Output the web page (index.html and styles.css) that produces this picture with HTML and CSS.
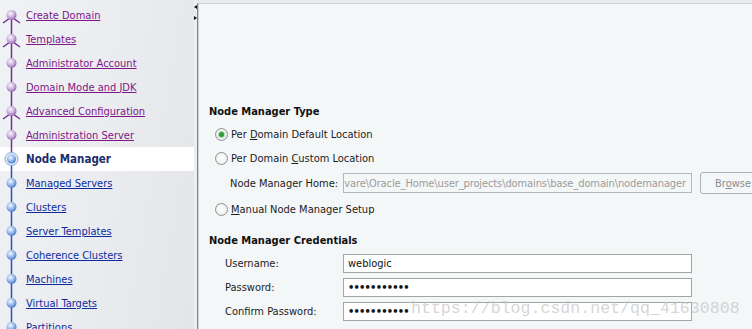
FILE: index.html
```html
<!DOCTYPE html>
<html lang="en">
<head>
    <meta charset="UTF-8">
    <meta name="viewport" content="width=device-width, initial-scale=1.0">
    <title>Node Manager</title>
    <link rel="stylesheet" href="styles.css">
</head>
<body>
    <div class="window">
        <nav class="steps">
            <div class="step">
                <svg class="node" width="26" height="24">
                    <defs>
                        <radialGradient id="gp" cx="0.4" cy="0.35" r="0.7">
                            <stop offset="0" stop-color="#fbf8fd"/>
                            <stop offset="0.45" stop-color="#d2bce2"/>
                            <stop offset="1" stop-color="#8c62ab"/>
                        </radialGradient>
                        <radialGradient id="gb" cx="0.4" cy="0.35" r="0.7">
                            <stop offset="0" stop-color="#f3f8ff"/>
                            <stop offset="0.45" stop-color="#a3c4f0"/>
                            <stop offset="1" stop-color="#3a70c8"/>
                        </radialGradient>
                    </defs>
                    <path class="ln-p" d="M11.5 12V24M3 20L11.5 14L20 20"/>
                    <circle class="dot-p" cx="11.5" cy="12" r="5"/>
                </svg>
                <a href="#">Create Domain</a>
            </div>
            <div class="step">
                <svg class="node" width="26" height="24"><path class="ln-p" d="M11.5 0V24M3 20L11.5 14L20 20"/><circle class="dot-p" cx="11.5" cy="12" r="5"/></svg>
                <a href="#">Templates</a>
            </div>
            <div class="step">
                <svg class="node" width="26" height="24"><path class="ln-p" d="M11.5 0V24"/><circle class="dot-p" cx="11.5" cy="12" r="5"/></svg>
                <a href="#">Administrator Account</a>
            </div>
            <div class="step">
                <svg class="node" width="26" height="24"><path class="ln-p" d="M11.5 0V24"/><circle class="dot-p" cx="11.5" cy="12" r="5"/></svg>
                <a href="#">Domain Mode and JDK</a>
            </div>
            <div class="step">
                <svg class="node" width="26" height="24"><path class="ln-p" d="M11.5 0V24M3 20L11.5 14L20 20"/><circle class="dot-p" cx="11.5" cy="12" r="5"/></svg>
                <a href="#">Advanced Configuration</a>
            </div>
            <div class="step">
                <svg class="node" width="26" height="24"><path class="ln-p" d="M11.5 0V24"/><circle class="dot-p" cx="11.5" cy="12" r="5"/></svg>
                <a href="#">Administration Server</a>
            </div>
            <div class="step current">
                <svg class="node" width="26" height="24"><path class="ln-p" d="M11.5 0V12"/><path class="ln-b" d="M11.5 12V24"/><circle class="ring" cx="11.5" cy="12" r="6.5"/><circle class="dot-b" cx="11.5" cy="12" r="4.5"/></svg>
                <span>Node Manager</span>
            </div>
            <div class="step todo">
                <svg class="node" width="26" height="24"><path class="ln-b" d="M11.5 0V24"/><circle class="dot-b" cx="11.5" cy="12" r="5"/></svg>
                <a href="#">Managed Servers</a>
            </div>
            <div class="step todo">
                <svg class="node" width="26" height="24"><path class="ln-b" d="M11.5 0V24"/><circle class="dot-b" cx="11.5" cy="12" r="5"/></svg>
                <a href="#">Clusters</a>
            </div>
            <div class="step todo">
                <svg class="node" width="26" height="24"><path class="ln-b" d="M11.5 0V24"/><circle class="dot-b" cx="11.5" cy="12" r="5"/></svg>
                <a href="#">Server Templates</a>
            </div>
            <div class="step todo">
                <svg class="node" width="26" height="24"><path class="ln-b" d="M11.5 0V24"/><circle class="dot-b" cx="11.5" cy="12" r="5"/></svg>
                <a href="#">Coherence Clusters</a>
            </div>
            <div class="step todo">
                <svg class="node" width="26" height="24"><path class="ln-b" d="M11.5 0V24"/><circle class="dot-b" cx="11.5" cy="12" r="5"/></svg>
                <a href="#">Machines</a>
            </div>
            <div class="step todo">
                <svg class="node" width="26" height="24"><path class="ln-b" d="M11.5 0V24"/><circle class="dot-b" cx="11.5" cy="12" r="5"/></svg>
                <a href="#">Virtual Targets</a>
            </div>
            <div class="step todo">
                <svg class="node" width="26" height="24"><path class="ln-b" d="M11.5 0V24"/><circle class="dot-b" cx="11.5" cy="12" r="5"/></svg>
                <a href="#">Partitions</a>
            </div>
        </nav>

        <div class="splitter">
            <span class="arrow-left"></span>
            <span class="arrow-right"></span>
        </div>

        <div class="main">
            <div class="panel">
                <h2>Node Manager Type</h2>
                <div class="option">
                    <span class="radio checked"></span>
                    <span>Per <u>D</u>omain Default Location</span>
                </div>
                <div class="option">
                    <span class="radio"></span>
                    <span>Per Domain <u>C</u>ustom Location</span>
                </div>
                <div class="home-row">
                    <span class="home-label">Node Manager Home:</span>
                    <div class="field disabled"><span>vare\Oracle_Home\user_projects\domains\base_domain\nodemanager</span></div>
                    <button class="browse" disabled>Br<u>o</u>wse</button>
                </div>
                <div class="option tall">
                    <span class="radio"></span>
                    <span><u>M</u>anual Node Manager Setup</span>
                </div>

                <h2 class="second">Node Manager Credentials</h2>
                <div class="cred-row">
                    <label class="cred-label" for="user">Username:</label>
                    <input class="text-input" id="user" type="text" value="weblogic">
                </div>
                <div class="cred-row">
                    <label class="cred-label" for="pass">Password:</label>
                    <input class="text-input" id="pass" type="password" value="welcome1234">
                </div>
                <div class="cred-row">
                    <label class="cred-label" for="pass2">Confirm Password:</label>
                    <input class="text-input" id="pass2" type="password" value="welcome1234">
                </div>
            </div>
        </div>

        <div class="watermark">https://blog.csdn.net/qq_41630808</div>
    </div>
</body>
</html>
```

FILE: styles.css
```css
* {
    margin: 0;
    padding: 0;
    box-sizing: border-box;
}

body {
    font-family: "DejaVu Sans Condensed", "DejaVu Sans", sans-serif;
    font-stretch: condensed;
    font-size: 11px;
    color: #1b1b1b;
    overflow: hidden;
}

.window {
    position: relative;
    display: flex;
    height: 329px;
    overflow: hidden;
}

/* left step list */

.steps {
    width: 194px;
    flex: none;
    padding-top: 3px;
    background: linear-gradient(100deg, #f1f2f5 0%, #eaecf0 50%, #e3e5e9 100%);
}

.step {
    display: flex;
    align-items: center;
    height: 24px;
    white-space: nowrap;
}

.step a {
    color: #7d1785;
    text-decoration: underline;
}

.step.todo a {
    color: #0c2c9e;
}

.step.current {
    background-color: #fff;
}

.step.current span {
    font-weight: bold;
    font-size: 11.5px;
    color: #1b2d6b;
}

.node {
    flex: none;
    display: block;
}

.ln-p,
.ln-b {
    fill: none;
    stroke-width: 1.5;
}

.ln-p {
    stroke: #74309a;
}

.ln-b {
    stroke: #2a4fc2;
}

.dot-p {
    fill: url(#gp);
}

.dot-b {
    fill: url(#gb);
}

.ring {
    fill: #e3edf9;
    stroke: #86a9d9;
    stroke-width: 1;
}

/* splitter between panes */

.splitter {
    width: 3px;
    flex: none;
    background-color: #eceef2;
    display: flex;
    flex-direction: column;
    align-items: flex-end;
    padding-top: 5px;
    gap: 7px;
}

.arrow-left,
.arrow-right {
    width: 0;
    height: 0;
    border-top: 2.5px solid transparent;
    border-bottom: 2.5px solid transparent;
}

.arrow-left {
    border-right: 3px solid #111;
}

.arrow-right {
    border-left: 3px solid #111;
}

/* right pane */

.main {
    flex: 1;
    display: flex;
    flex-direction: column;
    padding-top: 3px;
    background-color: #e8eaee;
}

.panel {
    flex: 1;
    background-color: #f4f7f8;
    border-top: 1px solid #cdd1d7;
    border-left: 1px solid #7e848d;
    box-shadow: inset 1px 0 #cfd4db;
    padding: 98px 0 0 11px;
    white-space: nowrap;
}

.panel h2 {
    font-size: 11px;
    font-weight: bold;
    line-height: 20px;
    height: 20px;
    color: #111;
}

.panel h2.second {
    margin-top: 9px;
}

.option {
    display: flex;
    align-items: center;
    height: 24px;
    padding-left: 6px;
}

.option.tall {
    height: 26px;
}

.radio {
    width: 13px;
    height: 13px;
    margin-right: 3px;
    border: 1px solid #8e9092;
    border-radius: 50%;
    background: radial-gradient(circle at 50% 45%, #ffffff 0%, #f3f3f3 55%, #d9dadb 100%);
    display: flex;
    align-items: center;
    justify-content: center;
}

.radio.checked::after {
    content: "";
    width: 5px;
    height: 5px;
    border-radius: 50%;
    background-color: #2f9a33;
    box-shadow: 0 0 1px 1px #a7d7a8;
}

.home-row {
    display: flex;
    align-items: center;
    height: 26px;
    padding-left: 21px;
}

.home-label {
    width: 113px;
    flex: none;
    overflow: hidden;
}

.field {
    width: 349px;
    height: 20px;
    flex: none;
    border: 1px solid #b4b6b8;
    display: flex;
    align-items: center;
    justify-content: flex-end;
    overflow: hidden;
    padding: 0 5px 0 2px;
    margin-right: 8px;
    letter-spacing: -0.1px;
}

.field.disabled {
    background-color: #f4f7f8;
    color: #9b9b9b;
}

.browse {
    width: 70px;
    height: 22px;
    flex: none;
    font: inherit;
    color: #8c8c8c;
    text-align: left;
    padding-left: 14px;
    border: 1px solid #aeb2b7;
    border-radius: 3px;
    background-color: #f4f7f8;
}

.cred-row {
    display: flex;
    align-items: center;
    height: 24px;
    padding-left: 16px;
}

.cred-label {
    width: 118px;
}

.text-input {
    width: 349px;
    height: 19px;
    border: 1px solid #a5a5a5;
    background-color: #fff;
    padding: 0 4px;
    font: inherit;
    color: #111;
    outline: none;
}

.text-input[type="password"] {
    letter-spacing: -0.8px;
    font-weight: bold;
}

.watermark {
    position: absolute;
    left: 411px;
    top: 300px;
    font-family: "Liberation Mono", monospace;
    font-size: 16.6px;
    line-height: 17px;
    color: rgba(196, 196, 196, 0.7);
    pointer-events: none;
}
```
